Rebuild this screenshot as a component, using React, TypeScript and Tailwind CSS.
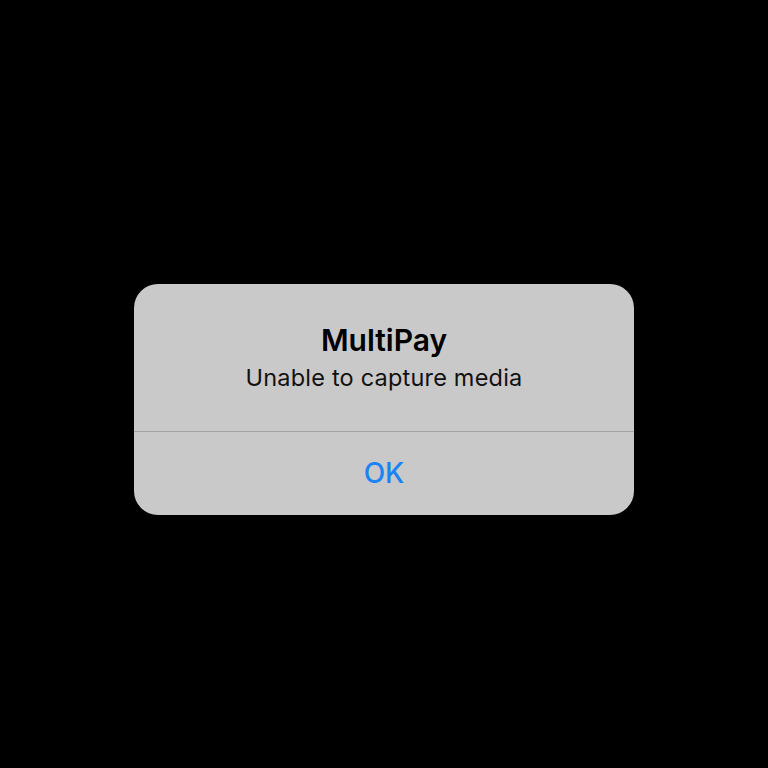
export default function App() {
  return (
    <div className="w-[768px] h-[768px] bg-black flex items-center justify-center" style={{ fontFamily: "Inter, 'Noto Sans', sans-serif" }}>
      <div className="w-[500px] mt-[30px] rounded-[24px] bg-[#c9c9c9] flex flex-col overflow-hidden">
        <div className="h-[148px] flex flex-col items-center pt-[38px] border-b border-[#a3a3a3]">
          <h1 className="text-[30px] leading-[36px] font-semibold text-black">MultiPay</h1>
          <p className="text-[23.5px] leading-[28px] text-[#111] mt-[6px] tracking-[0.2px]">Unable to capture media</p>
        </div>
        <button className="h-[83px] flex items-center justify-center text-[28px] font-medium text-[#1a83f5]">
          OK
        </button>
      </div>
    </div>
  );
}
